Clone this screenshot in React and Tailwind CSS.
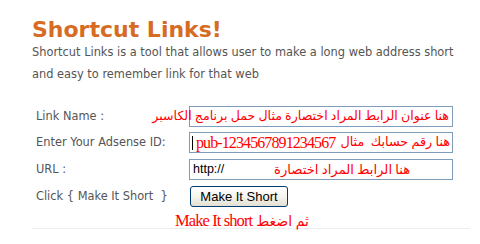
const label = "w-[157px] shrink-0 pl-[4px] text-[11.4px] text-[#555]";
const box = "w-[264px] h-[21px] shrink-0 border border-[#7f9db9] bg-white flex items-center";
const red = "text-[#ff0000] whitespace-nowrap font-['Liberation_Serif','DejaVu_Sans',serif]";

const Row = ({ name, className = "", children }) => (
  <div className={`flex items-center h-[21px] ${className}`}>
    <span className={label}>{name}</span>
    {children}
  </div>
);

export default function App() {
  return (
    <div className="w-[480px] h-[244px] overflow-hidden bg-white pl-[32px] pr-[10px] pt-[18px] font-['DejaVu_Sans',Verdana,sans-serif]">
      {/* Header */}
      <h1 className="text-[22px] leading-[23px] font-bold text-[#d66c24]">Shortcut Links!</h1>
      <p className="w-[430px] text-[11.4px] leading-[22px] text-[#555]">
        Shortcut Links is a tool that allows user to make a long web address short and easy to remember link for
        that web
      </p>

      {/* Form */}
      <div className="mt-[21px]">
        <Row name="Link Name :">
          <div className={`${box} justify-end pr-[3px]`}>
            <span dir="rtl" className={`${red} shrink-0 text-[12.6px] leading-none`}>
              هنا عنوان الرابط المراد اختصارة مثال حمل برنامج الكاسبر
            </span>
          </div>
        </Row>

        <Row name="Enter Your Adsense ID:" className="mt-[5px]">
          <div className={`${box} pl-[2px] pr-[2px]`}>
            <span className="w-px h-[14px] bg-black mr-[3px]" />
            <span className={`${red} text-[16px] leading-none tracking-[-0.9px]`}>pub-1234567891234567</span>
            <span dir="rtl" className={`${red} ml-auto text-[12.8px] leading-none`}>
              هنا رقم حسابك&nbsp;&nbsp;مثال
            </span>
          </div>
        </Row>

        <Row name="URL :" className="mt-[6px]">
          <div className={`${box} pl-[3px]`}>
            <span className="w-[81px] text-[12.5px] text-black font-['Liberation_Sans',Arial,sans-serif]">http://</span>
            <span dir="rtl" className={`${red} text-[13.2px] leading-none`}>
              هنا الرابط المراد اختصارة
            </span>
          </div>
        </Row>

        <Row name={"Click { Make It Short\u00a0\u00a0}"} className="mt-[6px]">
          <button className="ml-[1px] w-[98px] h-[21px] rounded-[3px] border border-[#003c74] bg-linear-to-b from-white via-[#f6f5ef] to-[#e3e0d2] text-[13px] leading-none text-black font-['Liberation_Sans',Arial,sans-serif]">
            Make It Short
          </button>
        </Row>
      </div>

      {/* Note */}
      <div className={`${red} mt-[4px] pl-[143px] h-[17px] text-[16.5px] leading-[19px]`}>
        <span className="tracking-[-0.9px]">Make It short</span>{" "}
        <span dir="rtl" className="text-[14px]">ثم اضغط</span>
      </div>
      <hr className="w-[438px] border-[#eeeeee]" />
    </div>
  );
}
